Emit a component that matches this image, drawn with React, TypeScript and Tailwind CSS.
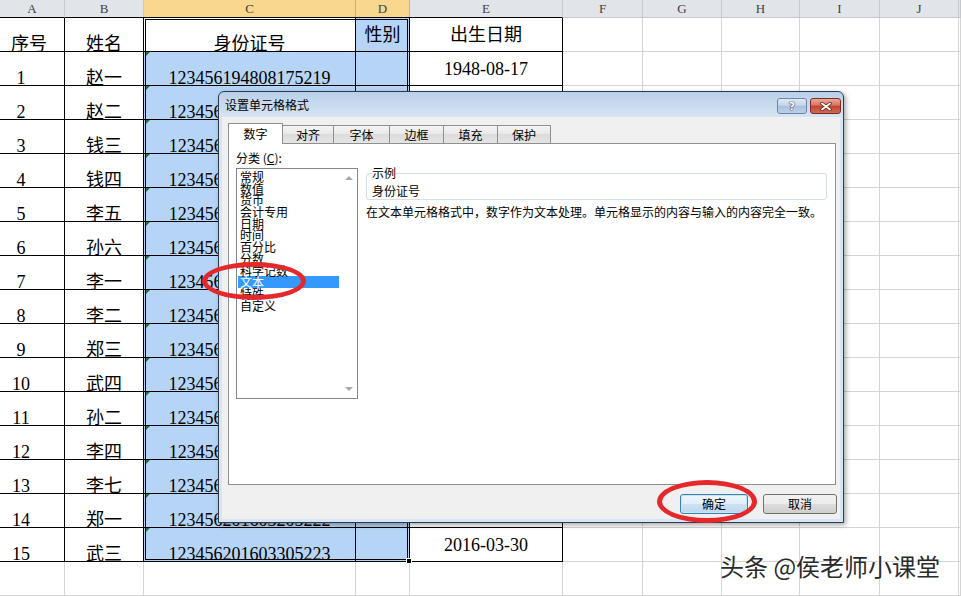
import React from "react";

const names = ["赵一","赵二","钱三","钱四","李五","孙六","李一","李二","郑三","武四","孙二","李四","李七","郑一","武三"];
const ids = [
  "123456194808175219","123456195203126338","123456196011054527","123456196507223316","123456197001184425",
  "123456197309306634","123456197805124421","123456198102286613","123456198512014528","123456198907157737",
  "123456199203294846","123456199608118855","123456200012206664","123456201603205222","123456201603305223",
];
const dates = ["1948-08-17","","","","","","","","","","","","","","2016-03-30"];
const letters = ["A","B","C","D","E","F","G","H","I","J",""];
const cats = ["常规","数值","货币","会计专用","日期","时间","百分比","分数","科学记数","文本","特殊","自定义"];
const tabs = [
  { t: "数字", w: "w-[55px]" },
  { t: "对齐", w: "w-[52px]" },
  { t: "字体", w: "w-[57px]" },
  { t: "边框", w: "w-[55px]" },
  { t: "填充", w: "w-[55px]" },
  { t: "保护", w: "w-[54px]" },
];

function EmptyGray({ k }: { k: string }) {
  return <div key={k} className="border-r border-b border-[#d4d4d4]" />;
}

function Sheet() {
  const cells: React.ReactNode[] = [];
  letters.forEach((l, i) => {
    cells.push(
      <div
        key={"h" + i}
        className={
          "flex items-center justify-center border-r border-b text-[13px] text-[#3f3f3f] " +
          (i === 2 || i === 3 ? "bg-[#f8d88f] border-r-[#e0ae4a] " : "bg-[#e1e4e8] border-r-[#c5c9ce] ") +
          (i < 5 ? "border-b-black" : "border-b-[#c5c9ce]")
        }
      >
        {l}
      </div>
    );
  });
  cells.push(
    <div key="r1a" className="flex items-end justify-center pr-[6px] border-r border-b border-black text-[18px] leading-[14px] text-black">序号</div>,
    <div key="r1b" className="flex items-end justify-center border-r border-b border-black text-[18px] leading-[14px] text-black">姓名</div>,
    <div key="r1c" className="flex items-end justify-center border-r border-b border-black text-[18px] leading-[14px] text-black bg-white">身份证号</div>,
    <div key="r1d" className="flex items-center justify-center border-r border-b border-black text-[18px] leading-[20px] text-black bg-[#b6d5f6]">性别</div>,
    <div key="r1e" className="flex items-center justify-center border-r border-b border-black text-[18px] leading-[20px] text-black">出生日期</div>
  );
  for (let c = 5; c < 11; c++) cells.push(<EmptyGray key={"r1" + c} k={"r1" + c} />);
  names.forEach((n, r) => {
    cells.push(
      <div key={"a" + r} className="flex items-end justify-center pr-[22px] border-r border-b border-black text-[18px] leading-[14px] text-black">{r + 1}</div>,
      <div key={"b" + r} className="flex items-end justify-center border-r border-b border-black text-[18px] leading-[14px] text-black">{n}</div>,
      <div key={"c" + r} className="relative flex items-end justify-center border-r border-b border-black text-[18px] leading-[14px] text-black bg-[#b6d5f6]">
        <span className="absolute left-[1px] top-0 w-0 h-0 border-t-[5px] border-r-[5px] border-t-[#2c6e3a] border-r-transparent" />
        {ids[r]}
      </div>,
      <div key={"d" + r} className="border-r border-b border-black bg-[#b6d5f6]" />,
      <div key={"e" + r} className="flex items-center justify-center border-r border-b border-black text-[18px] leading-[20px] text-black">{dates[r]}</div>
    );
    for (let c = 5; c < 11; c++) cells.push(<EmptyGray key={"d" + r + "_" + c} k={"d" + r + "_" + c} />);
  });
  for (let c = 0; c < 11; c++) cells.push(<EmptyGray key={"z" + c} k={"z" + c} />);

  return (
    <div className="grid grid-cols-[65px_79px_212px_54px_153px_80px_79px_78px_80px_79px_1fr] grid-rows-[18px_repeat(17,34px)]">
      {cells}
    </div>
  );
}

function Dialog() {
  return (
    <div className="absolute left-[218px] top-[91px] w-[626px] h-[432px] flex flex-col border border-[#2e3b4c] rounded-t-[6px] bg-[linear-gradient(180deg,#b9cfe9_0px,#d8e5f4_26px,#d8e5f4_100%)] shadow-[2px_2px_5px_rgba(0,0,0,0.35)] font-['Noto_Sans_CJK_SC',sans-serif] text-[12px] text-black">
      <div className="h-[25px] flex items-start shrink-0">
        <div className="self-center pl-[6px] leading-[14px] text-[12px] text-black">设置单元格格式</div>
        <div className="ml-auto mt-[6px] pr-[2px] flex gap-[3px]">
          <div className="w-[30px] h-[16px] flex items-center justify-center rounded-[3px] border border-[#6f87a6] bg-[linear-gradient(180deg,#dde8f5_0%,#c5d6eb_45%,#a9c1df_50%,#bccfe7_100%)]">
            <span className="font-['DejaVu_Sans',sans-serif] font-bold text-[11px] leading-[11px] text-white [text-shadow:0_0_1px_#2b3e55,0_0_1px_#2b3e55,0_0_1px_#2b3e55]">?</span>
          </div>
          <div className="w-[31px] h-[16px] flex items-center justify-center rounded-[3px] border border-[#7d2b22] bg-[linear-gradient(180deg,#eaa99c_0%,#d8735f_45%,#c1432e_50%,#d36a52_100%)]">
            <svg width="12" height="9" viewBox="0 0 12 9">
              <path d="M2 1.5 L10 7.5 M10 1.5 L2 7.5" stroke="#5a1c14" strokeWidth="3.4" strokeLinecap="round" />
              <path d="M2 1.5 L10 7.5 M10 1.5 L2 7.5" stroke="#ffffff" strokeWidth="1.9" strokeLinecap="round" />
            </svg>
          </div>
        </div>
      </div>
      <div className="flex-1 mx-[3px] mb-[3px] bg-[#f0f0f0] pt-[6px] pl-[6px] flex flex-col">
        <div className="h-[20px] flex items-end">
          {tabs.map((t, i) =>
            i === 0 ? (
              <div
                key={t.t}
                className={"relative z-10 h-[21px] -mb-[1px] flex items-start justify-center pt-[3px] leading-[14px] border border-b-0 border-[#8e8f8f] bg-white " + t.w}
              >
                {t.t}
              </div>
            ) : (
              <div
                key={t.t}
                className={"h-[18px] -ml-[1px] flex items-start justify-center pt-[2px] leading-[14px] border border-b-0 border-[#8e8f8f] bg-[linear-gradient(180deg,#f4f4f4_0%,#e8e8e8_50%,#dcdcdc_50%,#e4e4e4_100%)] " + t.w}
              >
                {t.t}
              </div>
            )
          )}
        </div>
        <div className="w-[608px] h-[342px] border border-[#8e8f8f] bg-white pt-[7px] pl-[7px] flex">
          <div className="w-[122px] flex flex-col">
            <div className="leading-[14px] h-[14px]">
              分类 (<span className="underline">C</span>):
            </div>
            <div className="mt-[3px] h-[231px] border border-[#828790] bg-white flex">
              <div className="w-[102px] pt-[2px] pl-[1px]">
                {cats.map((c) => (
                  <div
                    key={c}
                    className={
                      "h-[11.7px] leading-[11.7px] pl-[2px] whitespace-nowrap " +
                      (c === "文本" ? "bg-[#3399ff] text-white" : "text-black")
                    }
                  >
                    {c}
                  </div>
                ))}
              </div>
              <div className="w-[17px] ml-auto flex flex-col justify-between items-center py-[7px]">
                <span className="w-0 h-0 border-l-[4px] border-r-[4px] border-b-[4px] border-l-transparent border-r-transparent border-b-[#a9a9a9]" />
                <span className="w-0 h-0 border-l-[4px] border-r-[4px] border-t-[4px] border-l-transparent border-r-transparent border-t-[#a9a9a9]" />
              </div>
            </div>
          </div>
          <div className="ml-[8px] w-[461px] mt-[15px] flex flex-col">
            <fieldset className="border border-[#d5dfe5] rounded-[3px] px-[5px] pt-[4px] pb-[1px]">
              <legend className="leading-[14px] text-[12px]">示例</legend>
              <div className="leading-[14px]">身份证号</div>
            </fieldset>
            <div className="mt-[5px] leading-[14px] whitespace-nowrap">
              在文本单元格格式中，数字作为文本处理。单元格显示的内容与输入的内容完全一致。
            </div>
          </div>
        </div>
        <div className="mt-[9px] flex justify-end gap-[15px] pr-[3px]">
          <button className="w-[68px] h-[20px] flex items-center justify-center rounded-[3px] border border-[#3c7fb1] shadow-[inset_0_0_0_1px_#c4e5f9] bg-[linear-gradient(180deg,#eef6fc_0%,#e0eef9_50%,#cbe2f3_50%,#bdd8ee_100%)] text-[12px] leading-[14px]">
            确定
          </button>
          <button className="w-[74px] h-[20px] flex items-center justify-center rounded-[3px] border border-[#707070] bg-[linear-gradient(180deg,#f2f2f2_0%,#ebebeb_50%,#dddddd_50%,#cfcfcf_100%)] text-[12px] leading-[14px]">
            取消
          </button>
        </div>
      </div>
    </div>
  );
}

export default function App() {
  return (
    <div className="relative w-[961px] h-[596px] overflow-hidden bg-white font-['Liberation_Serif','Noto_Sans_CJK_SC',serif]">
      <Sheet />
      <div className="absolute left-[143px] top-[17px] w-[267px] h-[545px] border-[3px] border-double border-black pointer-events-none" />
      <div className="absolute left-[406px] top-[558px] w-[6px] h-[6px] bg-black border border-white" />
      <Dialog />
      <div className="absolute left-[202px] top-[262px] w-[104px] h-[38px] rounded-[50%] border-[5px] border-[#e4282c]" />
      <div className="absolute left-[657px] top-[480px] w-[100px] h-[43px] rounded-[50%] border-[5px] border-[#e4282c]" />
      <div className="absolute left-[720px] top-[550px] text-[24px] leading-[32px] font-['Noto_Sans_CJK_SC',sans-serif] text-[#2a2a2a] [text-shadow:0_0_2px_#fff,0_0_2px_#fff] whitespace-nowrap">
        头条 @侯老师小课堂
      </div>
    </div>
  );
}
